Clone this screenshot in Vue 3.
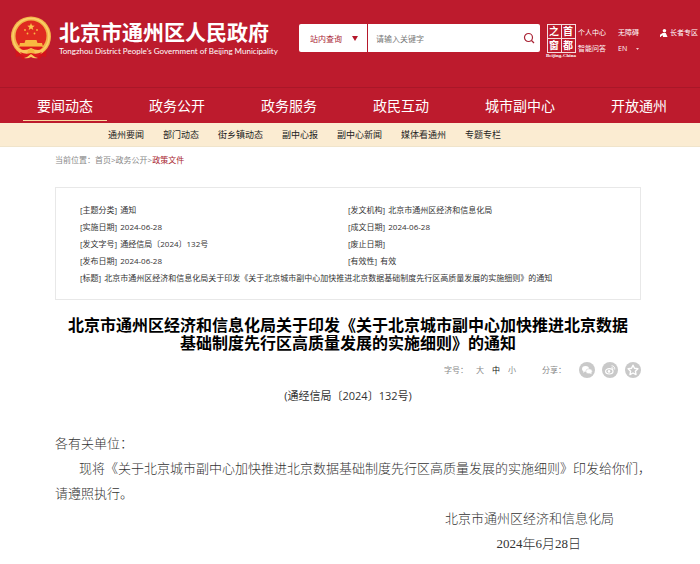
<script setup>
import { ref } from 'vue'

const keyword = ref('')
const scope = ref('site')
const size = ref('中')

const nav = ['要闻动态', '政务公开', '政务服务', '政民互动', '城市副中心', '开放通州']
const subnav = ['通州要闻', '部门动态', '街乡镇动态', '副中心报', '副中心新闻', '媒体看通州', '专题专栏']
const sizes = ['大', '中', '小']

const meta = [
  { label: '主题分类', value: '通知' },
  { label: '发文机构', value: '北京市通州区经济和信息化局' },
  { label: '实施日期', value: '2024-06-28' },
  { label: '成文日期', value: '2024-06-28' },
  { label: '发文字号', value: '通经信局〔2024〕132号' },
  { label: '废止日期', value: '' },
  { label: '发布日期', value: '2024-06-28' },
  { label: '有效性', value: '有效' },
  {
    label: '标题',
    value: '北京市通州区经济和信息化局关于印发《关于北京城市副中心加快推进北京数据基础制度先行区高质量发展的实施细则》的通知',
    wide: true
  }
]
</script>

<template>
  <div class="page">
    <header class="top">
      <a class="brand" href="#">
        <svg class="emblem" viewBox="0 0 42 46" aria-hidden="true">
          <path d="M5 29 L6 41 L10 40 L13 44 L17 39 H25 L29 44 L32 40 L36 41 L37 29Z" fill="#d3141c" />
          <circle cx="21" cy="20.500" r="20" fill="#f3b44a" />
          <circle cx="21" cy="20.500" r="18" fill="none" stroke="#fbd06a" stroke-width="1.500" />
          <circle cx="21" cy="20" r="15.500" fill="#df2a20" />
          <path d="M21 7l1 2.500 2.700.2-2.100 1.700.7 2.600-2.300-1.400-2.300 1.400.7-2.600-2.100-1.700 2.700-.2z" fill="#fbc24c" />
          <g fill="#f9b840">
            <circle cx="15" cy="14" r=".9" /><circle cx="27" cy="14" r=".9" />
            <circle cx="17.500" cy="17.500" r=".9" /><circle cx="24.500" cy="17.500" r=".9" />
            <path d="M15.500 24h11l1 3h4.500l1 3.500H9l1-3.500h4.500z" />
          </g>
          <path d="M9 31h24l-3 3H12z" fill="#dd1a1c" />
          <path d="M7 32q7 4 14 0q7 4 14 0l-3 5q-6 1-11-2q-5 3-11 2z" fill="#fbc65c" />
          <circle cx="21" cy="36.500" r="3.500" fill="#f5b63f" />
          <path d="M10 36q6 3 11 1q5 2 11-1l-4 5q-4 0-7-2q-3 2-7 2z" fill="#dd1a1c" />
          <path d="M14 42q4-1 7-4q3 3 7 4q-4 1-7-1q-3 2-7 1z" fill="#fbc65c" />
        </svg>
        <span class="names">
          <strong>北京市通州区人民政府</strong>
          <small>Tongzhou District People's Government of Beijing Municipality</small>
        </span>
      </a>

      <form class="search" role="search" @submit.prevent>
        <span class="scope">
          <select v-model="scope" aria-label="站内查询">
            <option value="site">站内查询</option>
          </select>
          <svg viewBox="0 0 6 5" aria-hidden="true"><path d="M0 0h6L3 5z" fill="#b5182b" /></svg>
        </span>
        <input v-model="keyword" type="text" placeholder="请输入关键字" aria-label="请输入关键字" />
        <button type="submit" aria-label="搜索">
          <svg viewBox="0 0 12 12" fill="none" stroke="#a92334" stroke-width="1.200" aria-hidden="true">
            <circle cx="5.500" cy="5.500" r="4" /><path d="M8.500 8.500l2.500 2.500" />
          </svg>
        </button>
      </form>

      <a class="seal" href="#">
        <span class="stamp"><b>之</b><b>首</b><b>窗</b><b>都</b></span>
        <span class="caption">Beijing-China</span>
      </a>

      <nav class="tools">
        <a href="#">个人中心</a>
        <a href="#">无障碍</a>
        <a href="#" class="elder">
          <svg viewBox="0 0 9 9" fill="#fff" aria-hidden="true">
            <circle cx="5" cy="2" r="2" />
            <path d="M3 4.500h3.500L8.500 9H3.500L3 7 1 8.500V9H0V6.500z" />
          </svg>
          长者专区
        </a>
        <a href="#">智能问答</a>
        <a href="#" class="lang">EN
          <svg viewBox="0 0 3 2" fill="#f2c9ce" aria-hidden="true"><path d="M0 0h3L1.500 2z" /></svg>
        </a>
      </nav>
    </header>

    <nav class="nav">
      <a v-for="(item, i) in nav" :key="item" href="#" :class="{ active: i === 0 }">{{ item }}</a>
    </nav>
    <nav class="subnav">
      <a v-for="item in subnav" :key="item" href="#">{{ item }}</a>
    </nav>

    <main class="main">
      <nav class="crumbs">
        <span>当前位置：</span><a href="#">首页</a>&gt;<a href="#">政务公开</a>&gt;<a class="here" href="#">政策文件</a>
      </nav>

      <dl class="meta">
        <div v-for="m in meta" :key="m.label" :class="{ wide: m.wide }">
          <dt>[{{ m.label }}]</dt>
          <dd>{{ m.value }}</dd>
        </div>
      </dl>

      <article>
        <h1>北京市通州区经济和信息化局关于印发《关于北京城市副中心加快推进北京数据<br />基础制度先行区高质量发展的实施细则》的通知</h1>

        <div class="actions">
          <div class="sizes">
            <span>字号：</span>
            <button v-for="s in sizes" :key="s" type="button" :class="{ on: s === size }" @click="size = s">{{ s }}</button>
          </div>
          <div class="share">
            <span>分享：</span>
            <button type="button" aria-label="微信">
              <svg viewBox="0 0 16 16" aria-hidden="true">
                <circle cx="8" cy="8" r="8" fill="#c9c9c9" />
                <ellipse cx="6.500" cy="6.800" rx="3.500" ry="2.900" fill="#fff" />
                <ellipse cx="10" cy="9.300" rx="3.200" ry="2.500" fill="#fff" stroke="#c9c9c9" stroke-width=".5" />
                <path d="M4.500 9l-.4 1.700 2-1zM11 11.300l1.500 1-.3-1.800z" fill="#fff" />
              </svg>
            </button>
            <button type="button" aria-label="微博">
              <svg viewBox="0 0 16 16" aria-hidden="true">
                <circle cx="8" cy="8" r="8" fill="#c9c9c9" />
                <ellipse cx="7.300" cy="9.300" rx="3.700" ry="2.700" fill="none" stroke="#fff" stroke-width="1.200" />
                <circle cx="7" cy="9.400" r="1.300" fill="#fff" />
                <path d="M9.500 3.800a3 3 0 0 1 3.200 3.700M9.500 5.500a1.400 1.400 0 0 1 1.500 1.600" fill="none" stroke="#fff" stroke-width=".9" />
              </svg>
            </button>
            <button type="button" aria-label="收藏">
              <svg viewBox="0 0 16 16" aria-hidden="true">
                <circle cx="8" cy="8" r="8" fill="#c9c9c9" />
                <path d="M8 3.200l1.500 3.100 3.400.5-2.500 2.400.6 3.400L8 11l-3 1.600.6-3.400-2.500-2.400 3.400-.5z" fill="none" stroke="#fff" stroke-width="1.400" stroke-linejoin="round" />
              </svg>
            </button>
          </div>
        </div>

        <p class="number">(通经信局〔2024〕132号)</p>

        <div class="body">
          <p>各有关单位：</p>
          <p class="indent">现将《关于北京城市副中心加快推进北京数据基础制度先行区高质量发展的实施细则》印发给你们，</p>
          <p>请遵照执行。</p>
          <p class="sign">北京市通州区经济和信息化局</p>
          <p class="date">2024年6月28日</p>
        </div>
      </article>
    </main>
  </div>
</template>

<style>
body {
  margin: 0;
  background: #fff;
}
</style>

<style scoped>
.page {
  font-family: "Open Sans", "Noto Sans CJK SC", sans-serif;
  font-size: 8px;
  color: #333;
}
a {
  color: inherit;
  text-decoration: none;
}
button,
input,
select {
  font: inherit;
  color: inherit;
  border: 0;
  padding: 0;
  margin: 0;
  background: none;
}
p,
h1,
dl,
dd {
  margin: 0;
}
svg {
  display: block;
}

.top {
  display: flex;
  align-items: flex-start;
  box-sizing: border-box;
  height: 88px;
  padding: 16px 0 0 10px;
  background: #bd1b2d;
  border-bottom: 1px solid #a91728;
  color: #fff;
}
.brand {
  display: flex;
  flex: 1;
  gap: 7px;
}
.emblem {
  width: 42px;
  height: 46px;
}
.names {
  display: flex;
  flex-direction: column;
  padding-top: 4px;
  white-space: nowrap;
}
.names strong {
  font-size: 21px;
  line-height: 24px;
}
.names small {
  font-family: Lato, "Open Sans", sans-serif;
  font-size: 8px;
  line-height: 14px;
}

.search {
  display: flex;
  align-items: center;
  width: 241px;
  height: 28px;
  margin-top: 8px;
  background: #fff;
  border-radius: 2px;
}
.scope {
  display: flex;
  align-items: center;
  gap: 8px;
  box-sizing: border-box;
  width: 69px;
  height: 28px;
  padding-left: 11px;
  border-right: 1px solid #b5182b;
}
.scope select {
  appearance: none;
  width: 34px;
  color: #a92334;
}
.scope svg {
  width: 6px;
  height: 5px;
}
.search input {
  flex: 1;
  min-width: 0;
  height: 28px;
  padding-left: 8px;
  color: #333;
  outline: none;
}
.search input::placeholder {
  color: #777;
  opacity: 1;
}
.search button {
  padding-right: 5px;
}
.search button svg {
  width: 12px;
  height: 12px;
}

.seal {
  display: flex;
  flex-direction: column;
  align-items: center;
  width: 32px;
  margin: 8px 1px 0 5px;
}
.stamp {
  display: grid;
  grid-template-columns: 1fr 1fr;
  gap: 1px;
  padding: 1px;
  background: #f6dde0;
}
.stamp b {
  width: 13px;
  height: 13px;
  background: #bd1b2d;
  font-size: 10px;
  line-height: 13px;
  text-align: center;
}
.caption {
  font-family: "Liberation Serif", serif;
  font-size: 5px;
  font-weight: bold;
  line-height: 6px;
  white-space: nowrap;
}

.tools {
  display: grid;
  grid-template-columns: 40px 42px 40px;
  row-gap: 6px;
  margin-top: 12px;
  font-size: 7px;
  line-height: 10px;
  white-space: nowrap;
}
.elder {
  display: flex;
  align-items: center;
  gap: 2px;
}
.elder svg {
  width: 8px;
  height: 8px;
}
.lang {
  display: flex;
  align-items: center;
  gap: 9px;
}
.lang svg {
  width: 3px;
  height: 2px;
}

.nav {
  display: flex;
  justify-content: center;
  gap: 28px;
  padding: 4px 0 2px 4px;
  background: #bd1b2d;
  color: #fff;
  font-size: 14px;
  line-height: 28px;
}
.nav a {
  padding: 0 14px;
  border-bottom: 1px solid transparent;
}
.nav .active {
  border-color: #f8d9a0;
}
.subnav {
  display: flex;
  gap: 19px;
  padding-left: 108px;
  background: #fbecd2;
  border-bottom: 1px solid #f0e4cb;
  color: #222;
  font-size: 9px;
  line-height: 23px;
}

.main {
  padding: 0 59px 0 55px;
}
.crumbs {
  padding-top: 5px;
  color: #888;
  line-height: 16px;
}
.crumbs .here {
  color: #a81c2e;
}
.meta {
  display: grid;
  grid-template-columns: 1fr 1fr;
  margin-top: 19px;
  padding: 13px 24px;
  border: 1px solid #e8e8e8;
  line-height: 17px;
}
.meta div {
  display: flex;
  gap: 3px;
}
.meta .wide {
  grid-column: 1 / -1;
}

h1 {
  margin-top: 16px;
  color: #000;
  font-size: 16px;
  line-height: 18px;
  text-align: center;
}
.actions {
  display: flex;
  justify-content: flex-end;
  gap: 26px;
  margin-top: 10px;
  color: #888;
  line-height: 16px;
}
.sizes,
.share {
  display: flex;
  align-items: center;
  gap: 8px;
}
.sizes .on {
  color: #111;
}
.share {
  gap: 7px;
}
.share span {
  margin-right: 6px;
}
.share svg {
  width: 16px;
  height: 16px;
}
.number {
  margin-top: 10px;
  font-size: 11px;
  line-height: 16px;
  text-align: center;
}
.body {
  margin-top: 27px;
  font-family: "Liberation Serif", "Noto Sans CJK SC", serif;
  font-size: 13px;
  font-weight: 300;
  line-height: 25px;
}
.indent {
  padding-left: 24px;
  white-space: nowrap;
}
.sign,
.date {
  text-align: right;
}
.sign {
  padding-right: 27px;
}
.date {
  padding-right: 60px;
}
</style>
